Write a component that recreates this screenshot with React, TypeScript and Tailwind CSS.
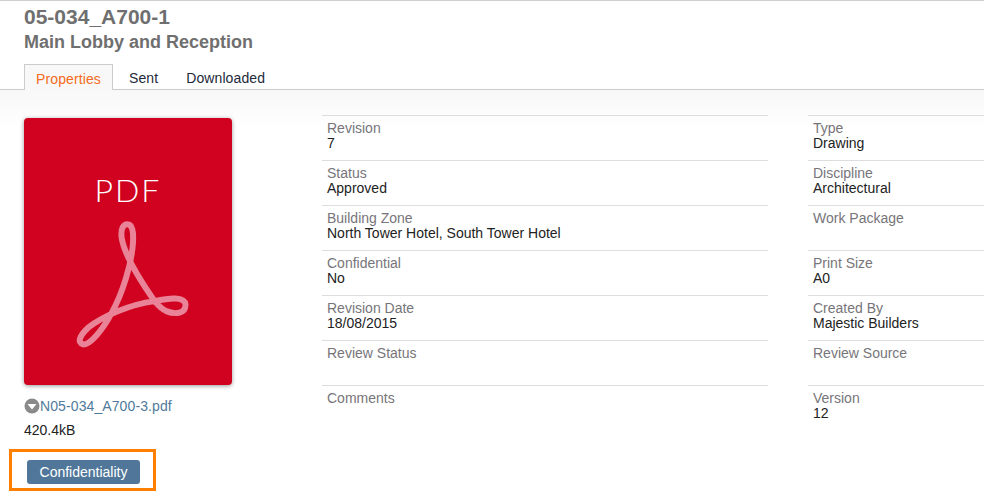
const leftRows = [
  { label: "Revision", value: "7" },
  { label: "Status", value: "Approved" },
  { label: "Building Zone", value: "North Tower Hotel, South Tower Hotel" },
  { label: "Confidential", value: "No" },
  { label: "Revision Date", value: "18/08/2015" },
  { label: "Review Status", value: "" },
  { label: "Comments", value: "" },
];

const rightRows = [
  { label: "Type", value: "Drawing" },
  { label: "Discipline", value: "Architectural" },
  { label: "Work Package", value: "" },
  { label: "Print Size", value: "A0" },
  { label: "Created By", value: "Majestic Builders" },
  { label: "Review Source", value: "" },
  { label: "Version", value: "12" },
];

const PropertyList = ({ rows, className }: { rows: { label: string; value: string }[]; className: string }) => (
  <div className={className}>
    {rows.map((row) => (
      <div key={row.label} className="h-[45px] border-t border-[#dddddd] pt-[5px] pl-[5px] text-[14px] leading-[15px]">
        <div className="text-[#77757a]">{row.label}</div>
        <div className="text-[#222222]">{row.value}</div>
      </div>
    ))}
  </div>
);

const PdfCard = () => (
  <div className="flex h-[267px] w-[208px] flex-col items-center rounded-[4px] bg-[#d0021f] shadow-[0_1px_4px_rgba(0,0,0,0.4)]">
    <div className="mt-[54px] text-[32px] leading-[36px] font-light tracking-[2px] text-white [font-family:'Lato','Liberation_Sans',sans-serif]">
      PDF
    </div>
    <svg width="120" height="133" viewBox="40 175 360 400" className="mt-[10px] ml-[10px]" fill="none">
      <path
        d="M285 425 C250 375 195 290 186 235 C182 205 192 194 203 194 C218 194 222 215 220 250 C216 310 190 400 155 462 C130 510 90 558 70 555 C52 550 58 530 85 505 C130 470 210 435 285 425 C330 415 375 410 378 435 C378 465 345 465 320 455 C305 448 295 437 285 425 Z"
        stroke="#e98397"
        strokeWidth="18"
        strokeLinejoin="round"
      />
    </svg>
  </div>
);

const App = () => {
  return (
    <div className="h-[494px] w-[984px] overflow-hidden bg-white [font-family:'Liberation_Sans',Arial,sans-serif]">
      {/* header */}
      <div className="h-[90px] border-t border-b border-t-[#cfcfcf] border-b-[#cccccc]">
        <div className="pl-6">
          <h1 className="mt-[4px] text-[21px] leading-[24px] font-bold text-[#6f6f6f]">05-034_A700-1</h1>
          <h2 className="mt-[1px] text-[18px] leading-[24px] font-bold text-[#6f6f6f]">Main Lobby and Reception</h2>
        </div>
        <div className="mt-[10px] flex h-[26px] pl-6 text-[14px] leading-[28px] tracking-[0.1px]">
          <div className="h-[26px] w-[89px] border border-b-0 border-[#cccccc] bg-[#f8f8f8] text-center text-[#f26b21]">
            Properties
          </div>
          <div className="ml-[16px] text-[#222a3a]">Sent</div>
          <div className="ml-[28px] text-[#222a3a]">Downloaded</div>
        </div>
      </div>

      {/* body */}
      <div className="flex bg-gradient-to-b from-[#f8f8f8] to-white to-[40px] pt-[25px]">
        <div className="ml-6 w-[208px] shrink-0 pt-[3px]">
          <PdfCard />
          <div className="mt-[13px] flex items-center text-[14px] leading-[16px] tracking-[0.1px] text-[#507a9c]">
            <svg width="16" height="16" viewBox="0 0 16 16" className="shrink-0">
              <circle cx="8" cy="8" r="7.5" fill="#8a8a8a" />
              <path d="M3.5 6 H12.5 L8 11.5 Z" fill="white" />
            </svg>
            N05-034_A700-3.pdf
          </div>
          <div className="mt-[8px] text-[14px] leading-[16px] text-[#222222]">420.4kB</div>
          <div className="mt-[11px] -ml-[15px] w-[147px] border-[3px] border-[#ff8000] pt-[8px] pb-[4px] pl-[15px]">
            <div className="h-[24px] w-[113px] rounded-[3px] bg-[#50779a] text-center text-[14px] leading-[24px] text-white">
              Confidentiality
            </div>
          </div>
        </div>
        <PropertyList rows={leftRows} className="ml-[90px] w-[446px] shrink-0" />
        <PropertyList rows={rightRows} className="ml-[40px] w-[176px] shrink-0" />
      </div>
    </div>
  );
};

export default App;
